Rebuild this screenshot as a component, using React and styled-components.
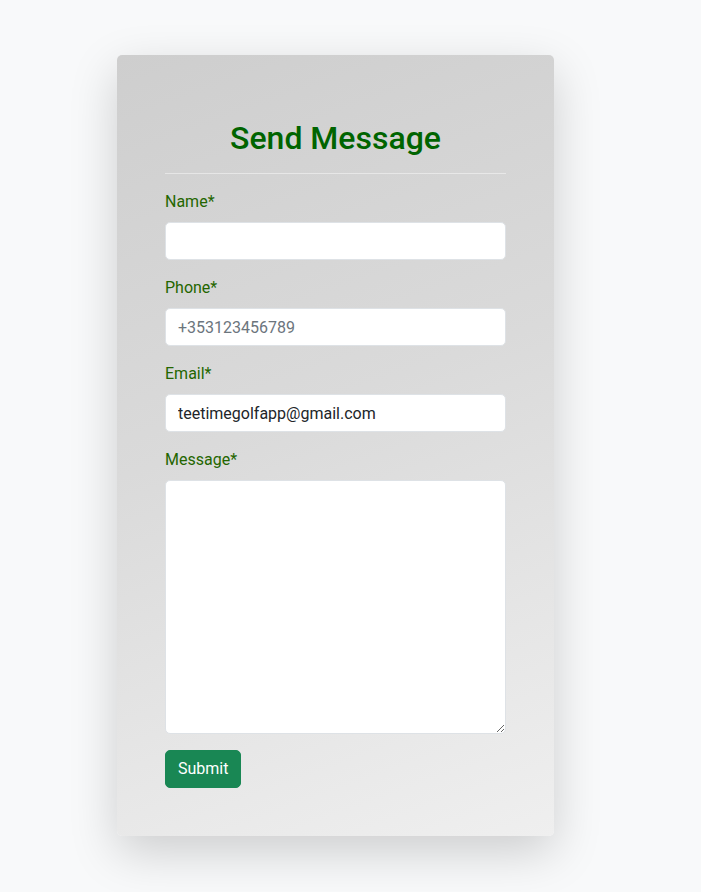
import React from "react";
import styled, { createGlobalStyle } from "styled-components";

const Global = createGlobalStyle`
  * { box-sizing: border-box; }
  html, body { margin: 0; padding: 0; background: #f8f9fa; }
  body { font-family: Roboto, "Liberation Sans", sans-serif; font-size: 16px; line-height: 1.5; color: #212529; }
`;

const Page = styled.div`
  min-height: 892px;
  padding: 55px 0 56px 117px;
`;

const Card = styled.form`
  width: 437px;
  padding: 64px 48px 48px;
  border-radius: 5px;
  background: linear-gradient(160deg, #cecece 0%, #dadada 45%, #efefef 100%);
  box-shadow: 0 1rem 3rem rgba(0, 0, 0, 0.175);
  display: flex;
  flex-direction: column;
`;

const Title = styled.h2`
  margin: 0;
  font-size: 32px;
  font-weight: 500;
  line-height: 1.2;
  text-align: center;
  color: #006400;
`;

const Rule = styled.hr`
  margin: 16px 0;
  border: 0;
  border-top: 1px solid rgba(255, 255, 255, 0.45);
`;

const Field = styled.div`
  display: flex;
  flex-direction: column;
  margin-bottom: 16px;
`;

const Label = styled.label`
  margin-bottom: 8px;
  color: #246600;
  font-size: 16px;
  line-height: 24px;
`;

const Input = styled.input`
  height: 38px;
  padding: 6px 12px;
  font: inherit;
  font-size: 16px;
  color: #212529;
  background: #fff;
  border: 1px solid #dee2e6;
  border-radius: 5px;
  outline: none;
  &::placeholder { color: #6c757d; }
`;

const TextArea = styled.textarea`
  height: 254px;
  padding: 6px 12px;
  font: inherit;
  background: #fff;
  border: 1px solid #dee2e6;
  border-radius: 5px;
  outline: none;
  resize: vertical;
`;

const Button = styled.button`
  align-self: flex-start;
  height: 38px;
  padding: 6px 12px;
  font: inherit;
  font-size: 16px;
  color: #fff;
  background: #198754;
  border: 1px solid #198754;
  border-radius: 5px;
  cursor: pointer;
`;

export default function App() {
  return (
    <>
      <Global />
      <Page>
        <Card onSubmit={(e) => e.preventDefault()}>
          <Title>Send Message</Title>
          <Rule />
          <Field>
            <Label>Name*</Label>
            <Input type="text" />
          </Field>
          <Field>
            <Label>Phone*</Label>
            <Input type="tel" placeholder="+353123456789" />
          </Field>
          <Field>
            <Label>Email*</Label>
            <Input type="email" defaultValue="teetimegolfapp@gmail.com" />
          </Field>
          <Field>
            <Label>Message*</Label>
            <TextArea />
          </Field>
          <Button type="submit">Submit</Button>
        </Card>
      </Page>
    </>
  );
}
